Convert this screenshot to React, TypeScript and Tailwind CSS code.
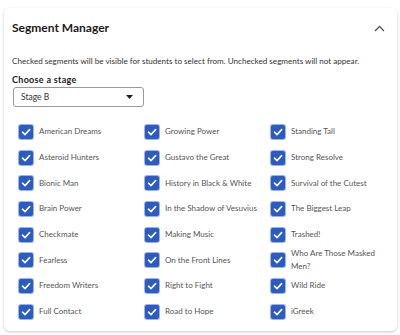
import React from "react";

const items = [
  "American Dreams", "Growing Power", "Standing Tall",
  "Asteroid Hunters", "Gustavo the Great", "Strong Resolve",
  "Bionic Man", "History in Black & White", "Survival of the Cutest",
  "Brain Power", "In the Shadow of Vesuvius", "The Biggest Leap",
  "Checkmate", "Making Music", "Trashed!",
  "Fearless", "On the Front Lines", "Who Are Those Masked Men?",
  "Freedom Writers", "Right to Fight", "Wild Ride",
  "Full Contact", "Road to Hope", "iGreek",
];

function Check() {
  return (
    <span className="flex h-[14px] w-[14px] shrink-0 items-center justify-center rounded-[2px] bg-[#2b5bc5] ring-1 ring-[#9db3e6]">
      <svg width="10" height="10" viewBox="0 0 10 10" fill="none">
        <path d="M1.5 5.2 L4 7.6 L8.6 2.6" stroke="white" strokeWidth="1.6" strokeLinecap="round" strokeLinejoin="round" />
      </svg>
    </span>
  );
}

export default function App() {
  return (
    <div className="h-[335px] w-[400px] bg-white pl-[4px] pr-[3px] pt-[8px]" style={{ fontFamily: "Lato, 'Noto Sans', sans-serif" }}>
      <div className="h-[323px] rounded-[6px] bg-white shadow-[0_1px_3px_rgba(0,0,0,0.22)]">
        <div className="flex items-center justify-between pl-[8px] pr-[12px] pt-[12px]">
          <h2 className="text-[12px] font-bold leading-[16px] text-[#1b1b1b]">Segment Manager</h2>
          <svg width="11" height="7" viewBox="0 0 11 7" fill="none">
            <path d="M1 6 L5.5 1.5 L10 6" stroke="#555" strokeWidth="1.3" />
          </svg>
        </div>
        <p className="mt-[20px] pl-[8px] text-[8.1px] leading-[10px] text-[#333]">
          Checked segments will be visible for students to select from. Unchecked segments will not appear.
        </p>
        <div className="mt-[8px] pl-[8px] text-[9px] font-bold leading-[12px] tracking-[0.3px] text-[#1b1b1b]">Choose a stage</div>
        <div className="ml-[9px] mt-[1px] flex h-[20px] w-[131px] items-center justify-between rounded-[3px] border border-[#999] pl-[7px] pr-[10px]">
          <span className="text-[8.5px] text-[#333]">Stage B</span>
          <svg width="7" height="4" viewBox="0 0 7 4"><path d="M0 0 H7 L3.5 4 Z" fill="#222" /></svg>
        </div>
        <div className="ml-[15px] mt-[12px] grid grid-cols-[126px_126px_1fr]">
          {items.map((t) => (
            <div key={t} className="flex h-[25.7px] items-center gap-[6px]">
              <Check />
              <span className="pr-[4px] text-[8px] leading-[13px] text-[#555]">{t}</span>
            </div>
          ))}
        </div>
      </div>
    </div>
  );
}
